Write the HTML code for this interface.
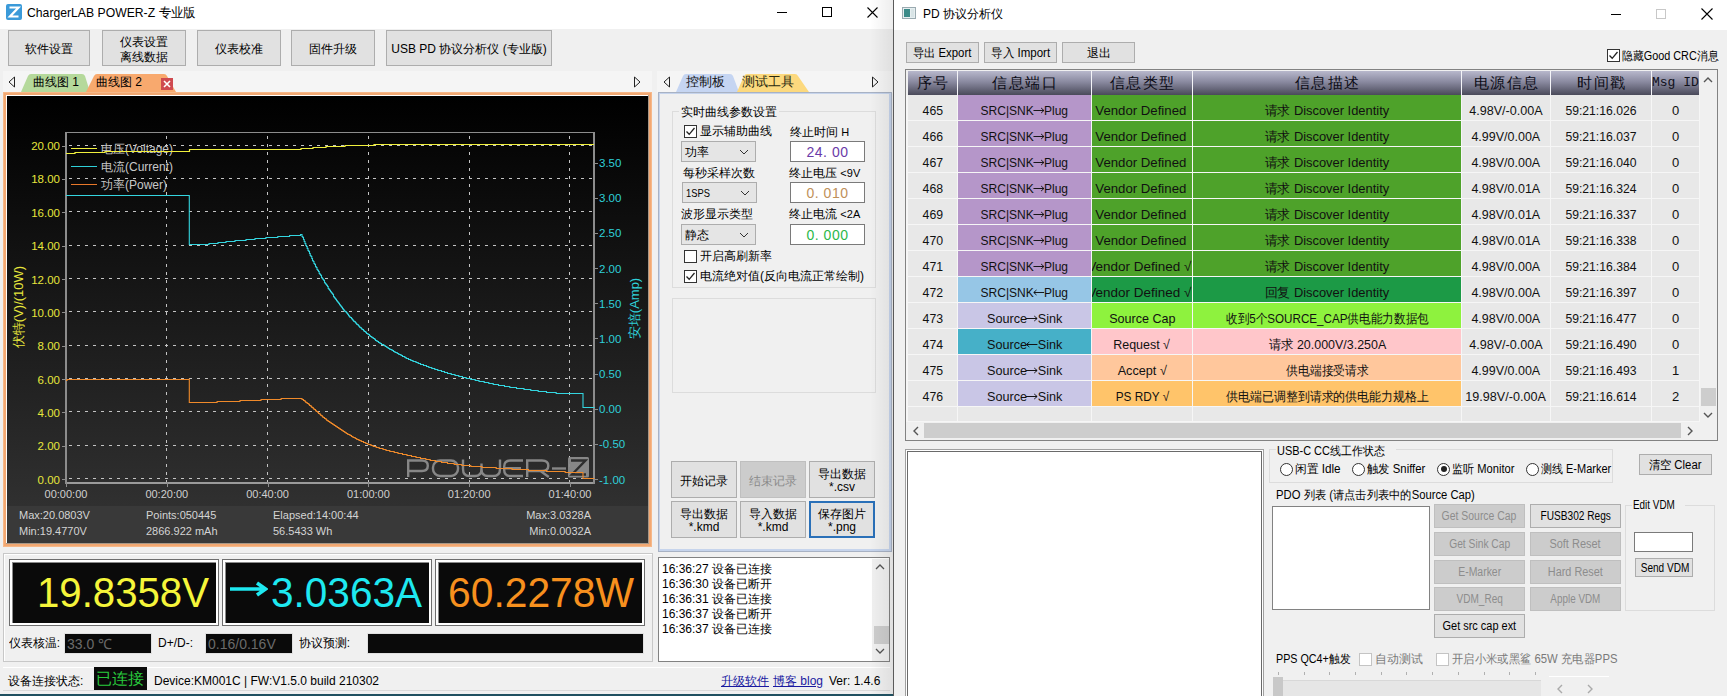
<!DOCTYPE html><html><head><meta charset="utf-8"><style>
*{box-sizing:border-box}
body{margin:0;width:1727px;height:696px;overflow:hidden;position:relative;background:#f0f0f0;font-family:"Liberation Sans",sans-serif;font-size:12px;color:#000}
.t{position:absolute;white-space:nowrap;line-height:16px}
.arr{display:inline-block;vertical-align:middle;margin:0 1px;position:relative;top:-1px}
.btn{position:absolute;background:#e1e1e1;border:1px solid #adadad;box-sizing:content-box;white-space:nowrap}
.cell{position:absolute;white-space:nowrap;text-align:center;overflow:hidden;font-size:13px;line-height:25px;padding-top:3px;color:#111}
</style></head><body>
<div style="position:absolute;left:0px;top:0px;width:893px;height:696px;background:#f0f0f0"></div>
<div style="position:absolute;left:0px;top:0px;width:893px;height:29px;background:#ffffff"></div>
<svg style="position:absolute;left:6px;top:4px" width="16" height="16" viewBox="0 0 16 16"><rect x="0" y="0" width="16" height="16" rx="2" fill="#3a9ad9"/><path d="M3.5 3.5H12.5L4 12.5H12.5" stroke="#fff" stroke-width="2.2" fill="none"/></svg>
<div class="t " style="left:27px;top:5px;font-size:12.8px;color:#000"><span id="f0" style="display:inline-block;transform-origin:left;transform:scaleX(0.9533)">ChargerLAB POWER-Z 专业版</span></div>
<div style="position:absolute;left:777px;top:12px;width:10px;height:1px;background:#000"></div>
<div style="position:absolute;left:822px;top:7px;width:10px;height:10px;border:1px solid #000"></div>
<svg style="position:absolute;left:867px;top:7px" width="11" height="11"><path d="M0.5 0.5L10.5 10.5M10.5 0.5L0.5 10.5" stroke="#000" stroke-width="1.1"/></svg>
<div class="btn" style="left:8px;top:30px;width:80px;height:34px;"><div style="position:absolute;left:0;right:0;top:calc(50% + 2px);transform:translateY(-50%);text-align:center;line-height:16px;font-size:12px;line-height:15.4px">软件设置</div></div>
<div class="btn" style="left:102px;top:30px;width:82px;height:34px;"><div style="position:absolute;left:0;right:0;top:calc(50% + 2px);transform:translateY(-50%);text-align:center;line-height:16px;font-size:12px;line-height:15.4px">仪表设置<br>离线数据</div></div>
<div class="btn" style="left:197px;top:30px;width:82px;height:34px;"><div style="position:absolute;left:0;right:0;top:calc(50% + 2px);transform:translateY(-50%);text-align:center;line-height:16px;font-size:12px;line-height:15.4px">仪表校准</div></div>
<div class="btn" style="left:291px;top:30px;width:82px;height:34px;"><div style="position:absolute;left:0;right:0;top:calc(50% + 2px);transform:translateY(-50%);text-align:center;line-height:16px;font-size:12px;line-height:15.4px">固件升级</div></div>
<div class="btn" style="left:386px;top:30px;width:164px;height:34px;"><div style="position:absolute;left:0;right:0;top:calc(50% + 2px);transform:translateY(-50%);text-align:center;line-height:16px;font-size:12px;line-height:15.4px">USB PD 协议分析仪 (专业版)</div></div>
<div style="position:absolute;left:3px;top:71px;width:649px;height:22px;background:#f5f5f5"></div>
<div style="position:absolute;left:657px;top:71px;width:236px;height:22px;background:#f5f5f5"></div>
<svg style="position:absolute;left:8px;top:76px" width="8" height="12"><path d="M6.5 1L1 6L6.5 11Z" stroke="#222" fill="none"/></svg>
<svg style="position:absolute;left:633px;top:76px" width="8" height="12"><path d="M1.5 1L7 6L1.5 11Z" stroke="#222" fill="none"/></svg>
<svg style="position:absolute;left:20px;top:73px" width="160" height="20"><path d="M1 19L8 3Q9 1 11 1H62Q64 1 65 3L70 19Z" fill="#b5d99b"/><path d="M66 19L74 3Q75 1 77 1H144Q146 1 147 3L156 19Z" fill="#f8a96e"/></svg>
<div class="t " style="left:33px;top:74px;font-size:12px">曲线图 1</div>
<div class="t " style="left:96px;top:74px;font-size:12px">曲线图 2</div>
<div style="position:absolute;left:161px;top:78px;width:12px;height:12px;background:#cf4a50"></div>
<svg style="position:absolute;left:163px;top:80px" width="8" height="8"><path d="M1 1L7 7M7 1L1 7" stroke="#fff" stroke-width="1.6"/></svg>
<div style="position:absolute;left:3px;top:92px;width:649px;height:455px;background:#f2a872;border:1px solid #f6b889"></div>
<div style="position:absolute;left:6px;top:95px;width:643px;height:449px;background:#fff;border-right:1px solid #a89888;border-bottom:1px solid #a89888"></div>
<svg style="position:absolute;left:7px;top:96px" width="641" height="447" viewBox="7 96 641 447"><defs><linearGradient id="bg" x1="0" y1="0" x2="0" y2="1"><stop offset="0" stop-color="#000"/><stop offset="0.05" stop-color="#020202"/><stop offset="1" stop-color="#303030"/></linearGradient></defs><rect x="7" y="96" width="641" height="410" fill="url(#bg)"/><rect x="7" y="506" width="641" height="37" fill="#393939"/><line x1="69" y1="478.5" x2="593" y2="478.5" stroke="#c4c4c4" stroke-width="1" stroke-dasharray="3 5"/><line x1="69" y1="445.5" x2="593" y2="445.5" stroke="#c4c4c4" stroke-width="1" stroke-dasharray="3 5"/><line x1="69" y1="411.5" x2="593" y2="411.5" stroke="#c4c4c4" stroke-width="1" stroke-dasharray="3 5"/><line x1="69" y1="378.5" x2="593" y2="378.5" stroke="#c4c4c4" stroke-width="1" stroke-dasharray="3 5"/><line x1="69" y1="345.5" x2="593" y2="345.5" stroke="#c4c4c4" stroke-width="1" stroke-dasharray="3 5"/><line x1="69" y1="311.5" x2="593" y2="311.5" stroke="#c4c4c4" stroke-width="1" stroke-dasharray="3 5"/><line x1="69" y1="278.5" x2="593" y2="278.5" stroke="#c4c4c4" stroke-width="1" stroke-dasharray="3 5"/><line x1="69" y1="245.5" x2="593" y2="245.5" stroke="#c4c4c4" stroke-width="1" stroke-dasharray="3 5"/><line x1="69" y1="211.5" x2="593" y2="211.5" stroke="#c4c4c4" stroke-width="1" stroke-dasharray="3 5"/><line x1="69" y1="178.5" x2="593" y2="178.5" stroke="#c4c4c4" stroke-width="1" stroke-dasharray="3 5"/><line x1="69" y1="145.5" x2="593" y2="145.5" stroke="#c4c4c4" stroke-width="1" stroke-dasharray="3 5"/><line x1="166.5" y1="136" x2="166.5" y2="482" stroke="#c4c4c4" stroke-width="1" stroke-dasharray="3 5"/><line x1="267.5" y1="136" x2="267.5" y2="482" stroke="#c4c4c4" stroke-width="1" stroke-dasharray="3 5"/><line x1="368.5" y1="136" x2="368.5" y2="482" stroke="#c4c4c4" stroke-width="1" stroke-dasharray="3 5"/><line x1="469.5" y1="136" x2="469.5" y2="482" stroke="#c4c4c4" stroke-width="1" stroke-dasharray="3 5"/><line x1="569.5" y1="136" x2="569.5" y2="482" stroke="#c4c4c4" stroke-width="1" stroke-dasharray="3 5"/><path d="M66 132.5H594.5V482.5H66Z" fill="none" stroke="#8c8c8c" stroke-width="1"/><path d="M65 483H595" stroke="#9a9a9a" stroke-width="2"/><path d="M66 132V484M594 132V484" stroke="#8c8c8c" stroke-width="2"/><line x1="62" y1="479.5" x2="66" y2="479.5" stroke="#8c8c8c"/><line x1="62" y1="446.5" x2="66" y2="446.5" stroke="#8c8c8c"/><line x1="62" y1="412.5" x2="66" y2="412.5" stroke="#8c8c8c"/><line x1="62" y1="379.5" x2="66" y2="379.5" stroke="#8c8c8c"/><line x1="62" y1="346.5" x2="66" y2="346.5" stroke="#8c8c8c"/><line x1="62" y1="312.5" x2="66" y2="312.5" stroke="#8c8c8c"/><line x1="62" y1="279.5" x2="66" y2="279.5" stroke="#8c8c8c"/><line x1="62" y1="246.5" x2="66" y2="246.5" stroke="#8c8c8c"/><line x1="62" y1="212.5" x2="66" y2="212.5" stroke="#8c8c8c"/><line x1="62" y1="179.5" x2="66" y2="179.5" stroke="#8c8c8c"/><line x1="62" y1="146.5" x2="66" y2="146.5" stroke="#8c8c8c"/><line x1="594" y1="163.5" x2="598" y2="163.5" stroke="#8c8c8c"/><line x1="594" y1="198.5" x2="598" y2="198.5" stroke="#8c8c8c"/><line x1="594" y1="233.5" x2="598" y2="233.5" stroke="#8c8c8c"/><line x1="594" y1="268.5" x2="598" y2="268.5" stroke="#8c8c8c"/><line x1="594" y1="303.5" x2="598" y2="303.5" stroke="#8c8c8c"/><line x1="594" y1="338.5" x2="598" y2="338.5" stroke="#8c8c8c"/><line x1="594" y1="374.5" x2="598" y2="374.5" stroke="#8c8c8c"/><line x1="594" y1="409.5" x2="598" y2="409.5" stroke="#8c8c8c"/><line x1="594" y1="444.5" x2="598" y2="444.5" stroke="#8c8c8c"/><line x1="594" y1="479.5" x2="598" y2="479.5" stroke="#8c8c8c"/><line x1="66.5" y1="482" x2="66.5" y2="487" stroke="#8c8c8c"/><line x1="167.5" y1="482" x2="167.5" y2="487" stroke="#8c8c8c"/><line x1="268.5" y1="482" x2="268.5" y2="487" stroke="#8c8c8c"/><line x1="368.5" y1="482" x2="368.5" y2="487" stroke="#8c8c8c"/><line x1="469.5" y1="482" x2="469.5" y2="487" stroke="#8c8c8c"/><line x1="570.5" y1="482" x2="570.5" y2="487" stroke="#8c8c8c"/><text x="60" y="483.7" text-anchor="end" font-size="11.5" fill="#e6e63c" font-family="Liberation Sans">0.00</text><text x="60" y="450.3" text-anchor="end" font-size="11.5" fill="#e6e63c" font-family="Liberation Sans">2.00</text><text x="60" y="417.0" text-anchor="end" font-size="11.5" fill="#e6e63c" font-family="Liberation Sans">4.00</text><text x="60" y="383.6" text-anchor="end" font-size="11.5" fill="#e6e63c" font-family="Liberation Sans">6.00</text><text x="60" y="350.2" text-anchor="end" font-size="11.5" fill="#e6e63c" font-family="Liberation Sans">8.00</text><text x="60" y="316.9" text-anchor="end" font-size="11.5" fill="#e6e63c" font-family="Liberation Sans">10.00</text><text x="60" y="283.5" text-anchor="end" font-size="11.5" fill="#e6e63c" font-family="Liberation Sans">12.00</text><text x="60" y="250.1" text-anchor="end" font-size="11.5" fill="#e6e63c" font-family="Liberation Sans">14.00</text><text x="60" y="216.7" text-anchor="end" font-size="11.5" fill="#e6e63c" font-family="Liberation Sans">16.00</text><text x="60" y="183.4" text-anchor="end" font-size="11.5" fill="#e6e63c" font-family="Liberation Sans">18.00</text><text x="60" y="150.0" text-anchor="end" font-size="11.5" fill="#e6e63c" font-family="Liberation Sans">20.00</text><text x="599" y="167.2" font-size="11.5" fill="#2fd0d8" font-family="Liberation Sans">3.50</text><text x="599" y="202.3" font-size="11.5" fill="#2fd0d8" font-family="Liberation Sans">3.00</text><text x="599" y="237.4" font-size="11.5" fill="#2fd0d8" font-family="Liberation Sans">2.50</text><text x="599" y="272.6" font-size="11.5" fill="#2fd0d8" font-family="Liberation Sans">2.00</text><text x="599" y="307.8" font-size="11.5" fill="#2fd0d8" font-family="Liberation Sans">1.50</text><text x="599" y="342.9" font-size="11.5" fill="#2fd0d8" font-family="Liberation Sans">1.00</text><text x="599" y="378.1" font-size="11.5" fill="#2fd0d8" font-family="Liberation Sans">0.50</text><text x="599" y="413.2" font-size="11.5" fill="#2fd0d8" font-family="Liberation Sans">0.00</text><text x="599" y="448.3" font-size="11.5" fill="#2fd0d8" font-family="Liberation Sans">-0.50</text><text x="599" y="483.5" font-size="11.5" fill="#2fd0d8" font-family="Liberation Sans">-1.00</text><text x="66.0" y="498" text-anchor="middle" font-size="11" fill="#cfcfcf" font-family="Liberation Sans">00:00:00</text><text x="166.8" y="498" text-anchor="middle" font-size="11" fill="#cfcfcf" font-family="Liberation Sans">00:20:00</text><text x="267.6" y="498" text-anchor="middle" font-size="11" fill="#cfcfcf" font-family="Liberation Sans">00:40:00</text><text x="368.4" y="498" text-anchor="middle" font-size="11" fill="#cfcfcf" font-family="Liberation Sans">01:00:00</text><text x="469.2" y="498" text-anchor="middle" font-size="11" fill="#cfcfcf" font-family="Liberation Sans">01:20:00</text><text x="570.0" y="498" text-anchor="middle" font-size="11" fill="#cfcfcf" font-family="Liberation Sans">01:40:00</text><text transform="translate(23,307) rotate(-90)" text-anchor="middle" font-size="13" fill="#e6e63c" font-family="Liberation Sans">伏特(V)/(10W)</text><text transform="translate(639,308.5) rotate(-90)" text-anchor="middle" font-size="13" fill="#2fd0d8" font-family="Liberation Sans">安培(Amp)</text><text x="19" y="519" font-size="11" fill="#d4d4d4" font-family="Liberation Sans">Max:20.0803V</text><text x="19" y="535" font-size="11" fill="#d4d4d4" font-family="Liberation Sans">Min:19.4770V</text><text x="146" y="519" font-size="11" fill="#d4d4d4" font-family="Liberation Sans">Points:050445</text><text x="146" y="535" font-size="11" fill="#d4d4d4" font-family="Liberation Sans">2866.922 mAh</text><text x="273" y="519" font-size="11" fill="#d4d4d4" font-family="Liberation Sans">Elapsed:14:00:44</text><text x="273" y="535" font-size="11" fill="#d4d4d4" font-family="Liberation Sans">56.5433 Wh</text><text x="591" y="519" text-anchor="end" font-size="11" fill="#d4d4d4" font-family="Liberation Sans">Max:3.0328A</text><text x="591" y="535" text-anchor="end" font-size="11" fill="#d4d4d4" font-family="Liberation Sans">Min:0.0032A</text><g fill="none" stroke="#8c8c8c" stroke-width="2.4" opacity="0.95" stroke-linecap="butt"><path d="M408.2 477V460.5H422Q427.8 460.5 427.8 465.8Q427.8 471 422 471H408.2"/><rect x="433" y="460.5" width="25" height="15.5" rx="7"/><path d="M463 459.5V469Q463 476 469.5 476H475Q481.5 476 481.5 469V463.5M481.5 469Q481.5 476 488 476H493.5Q500 476 500 469V459.5"/><path d="M523 460.5H510.5Q504.2 460.5 504.2 466.5V470Q504.2 476 510.5 476H523M505 468.3H521"/><path d="M527.2 477V460.5H542Q548.3 460.5 548.3 465.8Q548.3 471 542 471H527.2M540.5 471L548.8 477"/><path d="M552 468.5H566"/></g><rect x="568" y="457" width="21" height="20.5" rx="1.5" fill="#8c8c8c" opacity="0.95"/><path d="M571 460.5H585.5L572 474.5H586" stroke="#2e2e2e" stroke-width="2.4" fill="none"/><line x1="71" y1="148.5" x2="97" y2="148.5" stroke="#f0f03c" stroke-width="1"/><text x="101" y="153.0" font-size="12" fill="#c8c8c8" font-family="Liberation Sans">电压(Voltage)</text><line x1="71" y1="166.5" x2="97" y2="166.5" stroke="#2fd0d8" stroke-width="1"/><text x="101" y="171.0" font-size="12" fill="#c8c8c8" font-family="Liberation Sans">电流(Current)</text><line x1="71" y1="184.5" x2="97" y2="184.5" stroke="#e8782a" stroke-width="1"/><text x="101" y="189.0" font-size="12" fill="#c8c8c8" font-family="Liberation Sans">功率(Power)</text><polyline fill="none" stroke="#f0f03c" stroke-width="1.2" points="66,153.5 75,153.5 75,152.5 105,152.5 105,151.5 189.5,151.5 189.5,149.5 301,149.5 301,148.5 313,148.5 313,147.5 326,147.5 326,146.5 345,146.5 345,145.5 374,145.5 374,144.5 594,144.5"/><path fill="none" stroke="#34d6e0" stroke-width="1.1" d="M66.0 195.5H67.0H68.0H69.0H70.0H71.0H72.0H73.0H74.0H75.0H76.0H77.0H78.0H79.0H80.0H81.0H82.0H83.0H84.0H85.0H86.0H87.1H88.1H89.1H90.1H91.1H92.1H93.1H94.1H95.1H96.1H97.1H98.1H99.1H100.1H101.1H102.1H103.1H104.1H105.1H106.1H107.1H108.1H109.1H110.1H111.1H112.1H113.1H114.1H115.1H116.1H117.1H118.1H119.1H120.1H121.1H122.1H123.1H124.1H125.1H126.1H127.1H128.2H129.2H130.2H131.2H132.2H133.2H134.2H135.2H136.2H137.2H138.2H139.2H140.2H141.2H142.2H143.2H144.2H145.2H146.2H147.2H148.2H149.2H150.2H151.2H152.2H153.2H154.2H155.2H156.2H157.2H158.2H159.2H160.2H161.2H162.2H163.2H164.2H165.2H166.2H167.2H168.2H169.3H170.3H171.3H172.3H173.3H174.3H175.3H176.3H177.3H178.3H179.3H180.3H181.3H182.3H183.3H184.3H185.3H186.3H187.3H188.3H189.3V195.0H189.3V244.5H190.3H191.2H192.2H193.2H194.2H195.1H196.1H197.1H198.1H199.0H200.0H201.0H202.0H203.0H204.0H205.0H206.0H207.0H208.0H209.0V243.5H210.0H211.0H212.0H213.0H214.0H215.0H216.0H217.0H218.0V242.5H219.0H220.0H221.0H222.0H223.0H224.0H225.0H226.0V241.5H227.0H228.0H229.0H230.0H231.0H232.0H233.0H234.0H235.0V240.5H236.0H237.0H238.0H239.0H240.0H241.0H242.0H243.0H244.0H245.0H246.0V239.5H247.0H248.0H249.0H250.0H251.0H252.0H253.0H254.0H255.0V238.5H256.0H257.0H258.0H259.0H260.0H261.0H262.0H263.0H264.0H264.9H265.9V237.5H266.9H267.9H268.9H269.9H270.9H271.9H272.8H273.8H274.8H275.8H276.8H277.8V236.5H278.8H279.8H280.8H281.7H282.7H283.7H284.7H285.7H286.7H287.7H288.7H289.6V235.5H290.6H291.6H292.6H293.6H294.6H295.6H296.6H297.5H298.5H299.5H300.5V234.5H301.5H302.0V236.5H302.8V237.5H303.5V239.5H304.2V241.5H305.0V243.5H305.8V245.5H306.5V246.5H307.2V248.5H308.0V250.5H308.8V251.5H309.5V253.5H310.2V255.5H311.0V256.5H311.8V258.5H312.5V260.5H313.2V261.5H314.0V263.5H314.8V264.5H315.5V266.5H316.2V267.5H317.0V269.5H317.8V270.5H318.5V271.5H319.2V273.5H320.0V274.5H320.8V275.5H321.5V277.5H322.2V278.5H323.0V279.5H323.8V280.5H324.5V282.5H325.2V283.5H326.0V284.5H326.8V285.5H327.5V286.5H328.2V288.5H329.0V289.5H329.8V290.5H330.5V291.5H331.2V292.5H332.0V293.5H332.8V294.5H333.5V296.5H334.2V297.5H335.0V298.5H335.8V299.5H336.5V300.5H337.2V301.5H338.0V302.5H338.8V303.5H339.5V304.5H340.2V305.5H341.0V306.5H341.8V307.5H342.5V308.5H343.2V309.5H344.0V310.5H344.8V311.5H345.5H346.2V312.5H347.0V313.5H347.8V314.5H348.5V315.5H349.2V316.5H350.0V317.5H350.8H351.5V318.5H352.2V319.5H353.0V320.5H353.8V321.5H354.5H355.2V322.5H356.0V323.5H356.8V324.5H357.5H358.2V325.5H359.0V326.5H359.8V327.5H360.5H361.2V328.5H362.0V329.5H362.8H363.5V330.5H364.2V331.5H365.0H365.8V332.5H366.5V333.5H367.2H368.0V334.5H368.8H369.5V335.5H370.2V336.5H371.0H371.8V337.5H372.5H373.2V338.5H374.0H374.8V339.5H375.5V340.5H376.2H377.0V341.5H377.8H378.5V342.5H379.2H380.0V343.5H380.8H381.5V344.5H382.2H383.0H383.8V345.5H384.5H385.2V346.5H386.0H386.8V347.5H387.5H388.2V348.5H389.0H389.8V349.5H390.5H391.2H392.0V350.5H392.8H393.5V351.5H394.2H395.0V352.5H395.8H396.5H397.2V353.5H398.0H398.8V354.5H399.5H400.2H401.0V355.5H401.8H402.5V356.5H403.2H404.0H404.8V357.5H405.5H406.2V358.5H407.0H407.8H408.5V359.5H409.2H410.0H410.8V360.5H411.5H412.2H413.0V361.5H413.8H414.5H415.2H416.0V362.5H416.8H417.5H418.2V363.5H419.0H419.8H420.5V364.5H421.2H422.0H422.8H423.5V365.5H424.2H425.0H425.8H426.5V366.5H427.2H428.0H428.8V367.5H429.5H430.2H431.0H431.8V368.5H432.5H433.2H434.0H434.8V369.5H435.5H436.2H437.0H437.8V370.5H438.5H439.2H440.0H440.8H441.5V371.5H442.2H443.0H443.8H444.5V372.5H445.2H446.0H446.8H447.5V373.5H448.2H449.0H449.8H450.5H451.2V374.5H452.0H452.8H453.5H454.2H455.0V375.5H455.8H456.5H457.2H458.0H458.8V376.5H459.5H460.2H461.0H461.8H462.5V377.5H463.2H464.0H464.8H465.5H466.2V378.5H467.0H467.8H468.5H469.2H470.0H470.8V379.5H471.5H472.2H473.0H473.8H474.5H475.2V380.5H476.0H476.8H477.5H478.2H479.0V381.5H479.8H480.5H481.2H482.0H482.8H483.5H484.2V382.5H485.0H485.8H486.5H487.2H488.0H488.8V383.5H489.5H490.2H491.0H491.8H492.5H493.2V384.5H494.0H494.8H495.5H496.2H497.0H497.8H498.5V385.5H499.2H500.0H500.8H501.5H502.2H503.0H503.8H504.5V386.5H505.2H506.0H506.8H507.5H508.2H509.0H509.8V387.5H510.5H511.2H512.0H512.8H513.5H514.2H515.0H515.8H516.5V388.5H517.2H518.0H518.8H519.5H520.2H521.0H521.8H522.5H523.2H524.0V389.5H524.8H525.5H526.2H527.0H527.8H528.5H529.2H530.0H530.8V390.5H531.5H532.2H533.0H533.8H534.5H535.2H536.0H536.8H537.5H538.2V391.5H539.0H539.8H540.5H541.2H542.0H542.8H543.5H544.2H545.0H545.8H546.5V392.5H547.2H548.0H548.8H549.5H550.2H551.0H551.8H552.5H553.2H554.0H554.8H555.5H556.2V393.5H557.0H557.8H558.5H559.2H560.0H560.8H561.5H562.2H563.0H563.8H564.5H565.2H566.0H566.8H567.5H568.2H569.0H569.8H570.5H571.2H572.0H572.8H573.5H574.2H575.0H575.8H576.5H577.2H578.0H578.8H579.5H580.2H581.0H581.8H582.5H583.0V393.0H583.0V407.5H584.0H585.0H586.0H587.0H588.0H589.0H590.0H591.0H592.0H593.0H594.0V407.0"/><path fill="none" stroke="#f08a2a" stroke-width="1.1" d="M66.0 380.5H67.0V379.5H68.0H69.0H70.0H71.0H72.0H73.0H74.0H75.0H76.0H77.0H78.0H79.0H80.0H81.0H82.0H83.0H84.0H85.0H86.0H87.0H88.0H89.0H90.0H91.0H92.0H93.0H94.0H95.0H96.0H97.0H98.0H99.0H100.0H101.0H102.0H103.0H104.0H105.0H106.0H107.0H108.0H109.0H110.0H111.0H112.0H113.0H114.0H115.0H116.0H117.0H118.0H119.0H120.0H121.0H122.0H123.0H124.0H125.0H126.0H127.0H128.0H129.0H130.0H131.0H132.0H133.0H134.0H135.0H136.0H137.0H138.0H139.0H140.0H141.0H142.0H143.0H144.0H145.0H146.0H147.0H148.0H149.0H150.0H151.0H152.0H153.0H154.0H155.0H156.0H157.1H158.1H159.1H160.1H161.1H162.1H163.1H164.1H165.1H166.1H167.1H168.1H169.1H170.2H171.2H172.2H173.2H174.2H175.2H176.2H177.2H178.2H179.2H180.2H181.2H182.2H183.3H184.3H185.3H186.3H187.3H188.3H189.3V378.5H189.3V402.5H190.3H191.3H192.3H193.3H194.3H195.3H196.2H197.2H198.2H199.2H200.2H201.2H202.2H203.2H204.2H205.2H206.2H207.2H208.2H209.2H210.1H211.1H212.1H213.1H214.1H215.1H216.1H217.1V401.5H218.1H219.1H220.1H221.1H222.1H223.1H224.0H225.0H226.0H227.0H228.0H229.0H230.0H231.0H232.0H233.0H234.0H235.0H236.0H237.0H238.0H239.0H240.0V400.5H241.0H242.0H243.0H244.0H245.0H246.0H247.0H248.0H249.0H250.0H251.0H252.0H253.0H254.0H255.0H256.0H257.0H258.0H259.0H260.0H261.0V399.5H262.0H263.0H264.0H265.0H266.0H267.0H268.0H269.0H270.0H271.0H272.0H273.0H274.0H275.1H276.1H277.1H278.1H279.1H280.1H281.1V398.5H282.1H283.1H284.1H285.1H286.2H287.2H288.2H289.2H290.2H291.2H292.2H293.2H294.2H295.2H296.3H297.3H298.3H299.3H300.3H301.1H302.0V399.5H302.8H303.5V400.5H304.2H305.0V401.5H305.8V402.5H306.5H307.2V403.5H308.0H308.8V404.5H309.5V405.5H310.2H311.0V406.5H311.8V407.5H312.5H313.2V408.5H314.0V409.5H314.8H315.5V410.5H316.2V411.5H317.0H317.8V412.5H318.5V413.5H319.2H320.0V414.5H320.8V415.5H321.5H322.2V416.5H323.0V417.5H323.8H324.5V418.5H325.2H326.0V419.5H326.8V420.5H327.5H328.2V421.5H329.0H329.8V422.5H330.5H331.2V423.5H332.0H332.8V424.5H333.5H334.2V425.5H335.0H335.8V426.5H336.5H337.2V427.5H338.0H338.8V428.5H339.5H340.2V429.5H341.0H341.8V430.5H342.5H343.2V431.5H344.0H344.8V432.5H345.5H346.2V433.5H347.0H347.8V434.5H348.5H349.2H350.0V435.5H350.8H351.5V436.5H352.2H353.0V437.5H353.8H354.5H355.2V438.5H356.0H356.8V439.5H357.5H358.2H359.0V440.5H359.8H360.5H361.2V441.5H362.0H362.8H363.5V442.5H364.2H365.0H365.8V443.5H366.5H367.2H368.0V444.5H368.8H369.5H370.2H371.0V445.5H371.8H372.5H373.2V446.5H374.0H374.8H375.5H376.2V447.5H377.0H377.8H378.5H379.2V448.5H380.0H380.8H381.5H382.2H383.0V449.5H383.8H384.5H385.2H386.0V450.5H386.8H387.5H388.2H389.0H389.8V451.5H390.5H391.2H392.0H392.8H393.5H394.2V452.5H395.0H395.8H396.5H397.2H398.0V453.5H398.8H399.5H400.2H401.0H401.8H402.5V454.5H403.2H404.0H404.8H405.5H406.2H407.0V455.5H407.8H408.5H409.2H410.0H410.8H411.5V456.5H412.2H413.0H413.8H414.5H415.2H416.0V457.5H416.8H417.5H418.2H419.0H419.8H420.5V458.5H421.2H422.0H422.8H423.5H424.2H425.0H425.8V459.5H426.5H427.2H428.0H428.8H429.5H430.2V460.5H431.0H431.8H432.5H433.2H434.0H434.8H435.5V461.5H436.2H437.0H437.8H438.5H439.2H440.0H440.8H441.5V462.5H442.2H443.0H443.8H444.5H445.2H446.0H446.8H447.5V463.5H448.2H449.0H449.8H450.5H451.2H452.0H452.8H453.5H454.2V464.5H455.0H455.8H456.5H457.2H458.0H458.8H459.5H460.2H461.0H461.8V465.5H462.5H463.2H464.0H464.8H465.5H466.2H467.0H467.8H468.5H469.2H470.0H470.8V466.5H471.5H472.2H473.0H473.8H474.5H475.2H476.0H476.8H477.5H478.2H479.0H479.8H480.5H481.2H482.0V467.5H482.8H483.5H484.2H485.0H485.8H486.5H487.2H488.0H488.8H489.5H490.2H491.0H491.8H492.5H493.2H494.0H494.8H495.5H496.2V468.5H497.0H497.8H498.5H499.2H500.0H500.8H501.5H502.2H503.0H503.8H504.5H505.2H506.0H506.8H507.5H508.2H509.0H509.8H510.5H511.2H512.0V469.5H512.8H513.5H514.2H515.0H515.8H516.5H517.2H518.0H518.8H519.5H520.2H521.0H521.8H522.5H523.2H524.0H524.8H525.5H526.2H527.0H527.8H528.5V470.5H529.2H530.0H530.8H531.5H532.2H533.0H533.8H534.5H535.2H536.0H536.8H537.5H538.2H539.0H539.8H540.5H541.2H542.0H542.8H543.5H544.2H545.0H545.8H546.5V471.5H547.2H548.0H548.8H549.5H550.2H551.0H551.8H552.5H553.2H554.0H554.8H555.5H556.2H557.0H557.8H558.5H559.2H560.0H560.8H561.5H562.2H563.0H563.8H564.5H565.2V472.5H566.0H566.8H567.5H568.2H569.0H569.8H570.5H571.2H572.0H572.8H573.5H574.2H575.0H575.8H576.5H577.2H578.0H578.8H579.5H580.2H581.0H581.8H582.5H583.0V472.3H583.0V478.5H584.0H585.0H586.0H587.0H588.0H589.0H590.0H591.0H592.0H593.0H594.0V478.3"/></svg>
<svg style="position:absolute;left:663px;top:76px" width="8" height="12"><path d="M6.5 1L1 6L6.5 11Z" stroke="#222" fill="none"/></svg>
<svg style="position:absolute;left:871px;top:76px" width="8" height="12"><path d="M1.5 1L7 6L1.5 11Z" stroke="#222" fill="none"/></svg>
<svg style="position:absolute;left:675px;top:73px" width="140" height="20"><path d="M1 19L8 3Q9 1 11 1H55Q57 1 58 3L64 19Z" fill="#c5d5f2"/><path d="M62 19L69 3Q70 1 72 1H120Q122 1 123 3L134 19Z" fill="#fcd97e"/></svg>
<div class="t " style="left:686px;top:74px;font-size:13px;color:#111">控制板</div>
<div class="t " style="left:742px;top:74px;font-size:13px;color:#2a2a10">测试工具</div>
<div style="position:absolute;left:658px;top:92px;width:234px;height:460px;border:1px solid #a8b2c4;background:#f0f0f0"></div>
<div style="position:absolute;left:659px;top:93px;width:232px;height:458px;border:2px solid #c6d4ec;border-left-width:1px;border-top-width:1px"></div>
<div style="position:absolute;left:672px;top:111px;width:204px;height:177px;border:1px solid #dcdcdc"></div>
<div class="t " style="left:679px;top:104px;background:#f0f0f0;padding:0 2px">实时曲线参数设置</div>
<div style="position:absolute;left:684px;top:125px;width:13px;height:13px;border:1px solid #333;background:#fff"></div><svg style="position:absolute;left:684px;top:125px" width="13" height="13"><path d="M2.5 6.5L5.2 9.3L10.5 3" stroke="#222" stroke-width="1.3" fill="none"/></svg>
<div class="t " style="left:700px;top:123px;font-size:12px">显示辅助曲线</div>
<div class="t " style="left:790px;top:124px;font-size:12px">终止时间 <span style='font-size:11px'>H</span></div>
<div class="btn" style="left:681px;top:141px;width:73px;height:19px;background:#e5e5e5;border-color:#adadad"></div>
<div class="t " style="left:685px;top:143.5px;font-size:12px">功率</div>
<svg style="position:absolute;left:739px;top:148.5px" width="10" height="6"><path d="M1 1L5 5L9 1" stroke="#333" fill="none"/></svg>
<div style="position:absolute;left:790px;top:141px;width:75px;height:21px;border:1px solid #7a7a7a;background:#fff"></div>
<div class="t" style="left:790px;width:75px;text-align:center;top:143.5px;line-height:16px;font-size:14px;color:#6a3aa8;letter-spacing:0.5px">24. 00</div>
<div class="t " style="left:683px;top:165px;font-size:12px">每秒采样次数</div>
<div class="t " style="left:789px;top:165px;font-size:12px">终止电压 <span style='font-size:11px'>&lt;9V</span></div>
<div class="btn" style="left:682px;top:182px;width:73px;height:19px;background:#e5e5e5;border-color:#adadad"></div>
<div class="t " style="left:686px;top:184.5px;font-size:12px"><span style='font-size:11px;display:inline-block;transform:scaleX(0.85);transform-origin:left'>1SPS</span></div>
<svg style="position:absolute;left:740px;top:189.5px" width="10" height="6"><path d="M1 1L5 5L9 1" stroke="#333" fill="none"/></svg>
<div style="position:absolute;left:790px;top:182px;width:75px;height:21px;border:1px solid #7a7a7a;background:#fff"></div>
<div class="t" style="left:790px;width:75px;text-align:center;top:184.5px;line-height:16px;font-size:14px;color:#c0905a;letter-spacing:0.5px">0. 010</div>
<div class="t " style="left:681px;top:206px;font-size:12px">波形显示类型</div>
<div class="t " style="left:789px;top:206px;font-size:12px">终止电流 <span style='font-size:11px'>&lt;2A</span></div>
<div class="btn" style="left:681px;top:224px;width:73px;height:19px;background:#e5e5e5;border-color:#adadad"></div>
<div class="t " style="left:685px;top:226.5px;font-size:12px">静态</div>
<svg style="position:absolute;left:739px;top:231.5px" width="10" height="6"><path d="M1 1L5 5L9 1" stroke="#333" fill="none"/></svg>
<div style="position:absolute;left:790px;top:224px;width:75px;height:21px;border:1px solid #7a7a7a;background:#fff"></div>
<div class="t" style="left:790px;width:75px;text-align:center;top:226.5px;line-height:16px;font-size:14px;color:#2cb84a;letter-spacing:0.5px">0. 000</div>
<div style="position:absolute;left:684px;top:250px;width:13px;height:13px;border:1px solid #333;background:#fff"></div>
<div class="t " style="left:700px;top:248px;font-size:12px">开启高刷新率</div>
<div style="position:absolute;left:684px;top:270px;width:13px;height:13px;border:1px solid #333;background:#fff"></div><svg style="position:absolute;left:684px;top:270px" width="13" height="13"><path d="M2.5 6.5L5.2 9.3L10.5 3" stroke="#222" stroke-width="1.3" fill="none"/></svg>
<div class="t " style="left:700px;top:268px;font-size:12px">电流绝对值(反向电流正常绘制)</div>
<div style="position:absolute;left:672px;top:298px;width:204px;height:95px;border:1px solid #dcdcdc"></div>
<div class="btn" style="left:671px;top:461px;width:64px;height:35px;"><div style="position:absolute;left:0;right:0;top:calc(50% + 1px);transform:translateY(-50%);text-align:center;line-height:16px;font-size:12px">开始记录</div></div>
<div class="btn" style="left:740px;top:461px;width:64px;height:35px;background:#cccccc;border-color:#bfbfbf"><div style="position:absolute;left:0;right:0;top:calc(50% + 1px);transform:translateY(-50%);text-align:center;line-height:16px;font-size:12px;color:#8a8a8a">结束记录</div></div>
<div class="btn" style="left:809px;top:461px;width:64px;height:35px;"><div style="position:absolute;left:0;right:0;top:calc(50% + 1px);transform:translateY(-50%);text-align:center;line-height:16px;font-size:12px;line-height:13px">导出数据<br>*.csv</div></div>
<div class="btn" style="left:671px;top:501px;width:64px;height:35px;"><div style="position:absolute;left:0;right:0;top:calc(50% + 1px);transform:translateY(-50%);text-align:center;line-height:16px;font-size:12px;line-height:13px">导出数据<br>*.kmd</div></div>
<div class="btn" style="left:740px;top:501px;width:64px;height:35px;"><div style="position:absolute;left:0;right:0;top:calc(50% + 1px);transform:translateY(-50%);text-align:center;line-height:16px;font-size:12px;line-height:13px">导入数据<br>*.kmd</div></div>
<div class="btn" style="left:809px;top:501px;width:64px;height:35px;border:2px solid #2a70b8;background:#e1e1e1;width:62px;height:33px"><div style="position:absolute;left:0;right:0;top:calc(50% + 1px);transform:translateY(-50%);text-align:center;line-height:16px;font-size:12px;line-height:13px">保存图片<br>*.png</div></div>
<div style="position:absolute;left:3px;top:553px;width:650px;height:109px;border:1px solid #c8c8c8"></div>
<div style="position:absolute;left:4px;top:554px;width:648px;height:107px;border:1px solid #fff;border-right:none;border-bottom:none"></div>
<div style="position:absolute;left:9px;top:559px;width:210px;height:67px;border:1px solid #6e6e6e;background:#fff"></div>
<div style="position:absolute;left:12px;top:562px;width:204px;height:61px;border-top:1px solid #8a8a8a;border-left:1px solid #8a8a8a;background:#0a0a0a"></div>
<div style="position:absolute;left:36.5px;top:563px;line-height:59px;font-size:43px;color:#f5f53a;white-space:nowrap"><span id="f1" style="display:inline-block;transform-origin:left;transform:scaleX(0.9341)">19.8358V</span></div>
<div style="position:absolute;left:222px;top:559px;width:210px;height:67px;border:1px solid #6e6e6e;background:#fff"></div>
<div style="position:absolute;left:225px;top:562px;width:204px;height:61px;border-top:1px solid #8a8a8a;border-left:1px solid #8a8a8a;background:#0a0a0a"></div>
<div style="position:absolute;left:270.8px;top:563px;line-height:59px;font-size:43px;color:#1ee8f0;white-space:nowrap"><span id="f2" style="display:inline-block;transform-origin:left;transform:scaleX(0.9426)">3.0363A</span></div>
<svg style="position:absolute;left:229px;top:581px" width="39" height="16"><path d="M1 8H36M28 2L36.5 8L28 14" stroke="#1ee8f0" stroke-width="3.6" fill="none" stroke-linejoin="miter"/></svg>
<div style="position:absolute;left:435px;top:559px;width:210px;height:67px;border:1px solid #6e6e6e;background:#fff"></div>
<div style="position:absolute;left:438px;top:562px;width:204px;height:61px;border-top:1px solid #8a8a8a;border-left:1px solid #8a8a8a;background:#0a0a0a"></div>
<div style="position:absolute;left:447.8px;top:563px;line-height:59px;font-size:43px;color:#f7901e;white-space:nowrap"><span id="f3" style="display:inline-block;transform-origin:left;transform:scaleX(0.9488)">60.2278W</span></div>
<div class="t " style="left:9px;top:635px;font-size:12px"><span id="f4" style="display:inline-block;transform-origin:left;transform:scaleX(0.9933)">仪表核温:</span></div>
<div style="position:absolute;left:64px;top:633px;width:88px;height:21px;border:1px solid #e0e0e0;background:#0a0a0a"></div>
<div class="t " style="left:67px;top:635px;font-size:14px;color:#6a6a6a;line-height:18px">33.0 ℃</div>
<div class="t " style="left:158px;top:635px;font-size:12px">D+/D-:</div>
<div style="position:absolute;left:205px;top:633px;width:88px;height:21px;border:1px solid #e0e0e0;background:#0a0a0a"></div>
<div class="t " style="left:208px;top:635px;font-size:14px;color:#6a6a6a;line-height:18px">0.16/0.16V</div>
<div class="t " style="left:299px;top:635px;font-size:12px"><span id="f5" style="display:inline-block;transform-origin:left;transform:scaleX(0.9933)">协议预测:</span></div>
<div style="position:absolute;left:367px;top:633px;width:277px;height:21px;border:1px solid #e0e0e0;background:#0a0a0a"></div>
<div style="position:absolute;left:658px;top:557px;width:232px;height:105px;border:1px solid #828282;background:#fff"></div>
<div class="t " style="left:662px;top:562px;font-size:12px;line-height:14px">16:36:27 设备已连接</div>
<div class="t " style="left:662px;top:577px;font-size:12px;line-height:14px">16:36:30 设备已断开</div>
<div class="t " style="left:662px;top:592px;font-size:12px;line-height:14px">16:36:31 设备已连接</div>
<div class="t " style="left:662px;top:607px;font-size:12px;line-height:14px">16:36:37 设备已断开</div>
<div class="t " style="left:662px;top:622px;font-size:12px;line-height:14px">16:36:37 设备已连接</div>
<div style="position:absolute;left:872px;top:559px;width:17px;height:102px;background:#f0f0f0"></div>
<svg style="position:absolute;left:875px;top:563px" width="10" height="8"><path d="M1 6L5 2L9 6" stroke="#555" stroke-width="1.3" fill="none"/></svg>
<svg style="position:absolute;left:875px;top:647px" width="10" height="8"><path d="M1 2L5 6L9 2" stroke="#555" stroke-width="1.3" fill="none"/></svg>
<div style="position:absolute;left:874px;top:626px;width:15px;height:18px;background:#cdcdcd"></div>
<div style="position:absolute;left:3px;top:667px;width:887px;height:24px;border-top:1px solid #fff;border-bottom:1px solid #dadada"></div>
<div class="t " style="left:8px;top:673px;font-size:12px">设备连接状态:</div>
<div style="position:absolute;left:94px;top:667px;width:53px;height:23px;background:#0a0a0a"></div>
<div class="t " style="left:96px;top:669px;font-size:16px;color:#28c83c;line-height:19px">已连接</div>
<div class="t " style="left:154px;top:673px;font-size:12px">Device:KM001C | FW:V1.5.0 build 210302</div>
<div class="t " style="left:721px;top:673px;font-size:12px;color:#1a1aa0"><u>升级软件</u></div>
<div class="t " style="left:773px;top:673px;font-size:12px;color:#1a1aa0"><u>博客 blog</u></div>
<div class="t " style="left:829px;top:673px;font-size:12px">Ver: 1.4.6</div>
<div style="position:absolute;left:0px;top:694px;width:893px;height:2px;background:#1f5060"></div>
<div style="position:absolute;left:870px;top:0px;width:23px;height:694px;background:linear-gradient(to right,rgba(0,0,0,0),rgba(0,0,0,0.07))"></div>
<div style="position:absolute;left:893px;top:0px;width:834px;height:696px;background:#f0f0f0;border-left:1px solid #5a5a5a"></div>
<div style="position:absolute;left:894px;top:0px;width:833px;height:30px;background:#fff"></div>
<svg style="position:absolute;left:902px;top:7px" width="14" height="12"><rect x="0.5" y="0.5" width="13" height="11" fill="#e6eef0" stroke="#9aaab0"/><rect x="2" y="2" width="6" height="8" fill="#3a8a88"/><rect x="9" y="2" width="3" height="8" fill="#d8e4e6"/></svg>
<div class="t " style="left:923px;top:6px;font-size:12px">PD 协议分析仪</div>
<div style="position:absolute;left:1611px;top:14px;width:10px;height:1px;background:#000"></div>
<div style="position:absolute;left:1656px;top:9px;width:10px;height:10px;border:1px solid #c8c8c8"></div>
<svg style="position:absolute;left:1701px;top:8px" width="12" height="12"><path d="M0.5 0.5L11.5 11.5M11.5 0.5L0.5 11.5" stroke="#000" stroke-width="1.1"/></svg>
<div class="btn" style="left:906px;top:42px;width:71px;height:19px;"><div style="position:absolute;left:0;right:0;top:calc(50% + 0px);transform:translateY(-50%);text-align:center;line-height:16px;font-size:12px"><span id="f6" style="display:inline-block;transform-origin:center;transform:scaleX(0.9465)">导出 Export</span></div></div>
<div class="btn" style="left:984px;top:42px;width:71px;height:19px;"><div style="position:absolute;left:0;right:0;top:calc(50% + 0px);transform:translateY(-50%);text-align:center;line-height:16px;font-size:12px"><span id="f7" style="display:inline-block;transform-origin:center;transform:scaleX(0.9602)">导入 Import</span></div></div>
<div class="btn" style="left:1062px;top:42px;width:71px;height:19px;"><div style="position:absolute;left:0;right:0;top:calc(50% + 0px);transform:translateY(-50%);text-align:center;line-height:16px;font-size:12px">退出</div></div>
<div style="position:absolute;left:1607px;top:49px;width:13px;height:13px;border:1px solid #333;background:#fff"></div><svg style="position:absolute;left:1607px;top:49px" width="13" height="13"><path d="M2.5 6.5L5.2 9.3L10.5 3" stroke="#222" stroke-width="1.3" fill="none"/></svg>
<div class="t " style="left:1622px;top:48px;font-size:12px"><span id="f8" style="display:inline-block;transform-origin:left;transform:scaleX(0.9045)">隐藏Good CRC消息</span></div>
<div style="position:absolute;left:905px;top:69px;width:813px;height:372px;border:1px solid #828282;background:#f0f0f0"></div>
<div style="position:absolute;left:906px;top:70px;width:794px;height:25px;background:#f0f0f0"></div>
<div style="position:absolute;left:908px;top:71px;width:49px;height:24px;background:linear-gradient(#b8b8cc,#8a8aa0 45%,#4a4a5a)"></div>
<div class="t" style="left:908px;width:49px;text-align:center;top:75.0px;line-height:16px;font-size:14.5px;letter-spacing:1.5px;color:#0c0c16;text-indent:1.5px">序号</div>
<div style="position:absolute;left:958px;top:71px;width:133px;height:24px;background:linear-gradient(#b8b8cc,#8a8aa0 45%,#4a4a5a)"></div>
<div class="t" style="left:958px;width:133px;text-align:center;top:75.0px;line-height:16px;font-size:14.5px;letter-spacing:1.5px;color:#0c0c16;text-indent:1.5px">信息端口</div>
<div style="position:absolute;left:1092px;top:71px;width:100px;height:24px;background:linear-gradient(#b8b8cc,#8a8aa0 45%,#4a4a5a)"></div>
<div class="t" style="left:1092px;width:100px;text-align:center;top:75.0px;line-height:16px;font-size:14.5px;letter-spacing:1.5px;color:#0c0c16;text-indent:1.5px">信息类型</div>
<div style="position:absolute;left:1193px;top:71px;width:268px;height:24px;background:linear-gradient(#b8b8cc,#8a8aa0 45%,#4a4a5a)"></div>
<div class="t" style="left:1193px;width:268px;text-align:center;top:75.0px;line-height:16px;font-size:14.5px;letter-spacing:1.5px;color:#0c0c16;text-indent:1.5px">信息描述</div>
<div style="position:absolute;left:1462px;top:71px;width:88px;height:24px;background:linear-gradient(#b8b8cc,#8a8aa0 45%,#4a4a5a)"></div>
<div class="t" style="left:1462px;width:88px;text-align:center;top:75.0px;line-height:16px;font-size:14.5px;letter-spacing:1.5px;color:#0c0c16;text-indent:1.5px">电源信息</div>
<div style="position:absolute;left:1551px;top:71px;width:100px;height:24px;background:linear-gradient(#b8b8cc,#8a8aa0 45%,#4a4a5a)"></div>
<div class="t" style="left:1551px;width:100px;text-align:center;top:75.0px;line-height:16px;font-size:14.5px;letter-spacing:1.5px;color:#0c0c16;text-indent:1.5px">时间戳</div>
<div style="position:absolute;left:1652px;top:71px;width:47px;height:24px;background:linear-gradient(#b8b8cc,#8a8aa0 45%,#4a4a5a)"></div>
<div class="t" style="left:1652px;top:75px;font-family:'Liberation Mono',monospace;font-size:13px;letter-spacing:0;color:#10101a">Msg ID</div>
<div style="position:absolute;left:957px;top:71px;width:1px;height:24px;background:#f4f4f8"></div>
<div style="position:absolute;left:1091px;top:71px;width:1px;height:24px;background:#f4f4f8"></div>
<div style="position:absolute;left:1192px;top:71px;width:1px;height:24px;background:#f4f4f8"></div>
<div style="position:absolute;left:1461px;top:71px;width:1px;height:24px;background:#f4f4f8"></div>
<div style="position:absolute;left:1550px;top:71px;width:1px;height:24px;background:#f4f4f8"></div>
<div style="position:absolute;left:1651px;top:71px;width:1px;height:24px;background:#f4f4f8"></div>
<div style="position:absolute;left:906px;top:95px;width:794px;height:327px;background:#f6f6f6"></div>
<div class="cell" style="left:908px;top:95px;width:49px;height:25px;background:#e8e8e8;"><span id="f9" style="display:inline-block;transform-origin:center;transform:scaleX(0.9446)">465</span></div>
<div class="cell" style="left:958px;top:95px;width:133px;height:25px;background:#b596c9;"><span id="f10" style="display:inline-block;transform-origin:center;transform:scaleX(0.9250)">SRC|SNK<svg class="arr" width="12" height="9" style="margin:0 0 0 -1px"><path d="M0 4.5H11.5M8.5 2L11.5 4.5L8.5 7" stroke="#111" stroke-width="1" fill="none"/></svg>Plug</span></div>
<div class="cell" style="left:1092px;top:95px;width:100px;height:25px;background:#4ea22a;padding-right:3px;"><span id="f11" style="display:inline-block;transform-origin:center;transform:scaleX(1.0153)">Vendor Defined</span></div>
<div class="cell" style="left:1193px;top:95px;width:268px;height:25px;background:#4ea22a;"><span id="f12" style="display:inline-block;transform-origin:center;transform:scaleX(0.9912)">请求 Discover Identity</span></div>
<div class="cell" style="left:1462px;top:95px;width:88px;height:25px;background:#e8e8e8;"><span id="f13" style="display:inline-block;transform-origin:center;transform:scaleX(0.9685)">4.98V/-0.00A</span></div>
<div class="cell" style="left:1551px;top:95px;width:100px;height:25px;background:#e8e8e8;"><span id="f14" style="display:inline-block;transform-origin:center;transform:scaleX(0.9367)">59:21:16.026</span></div>
<div class="cell" style="left:1652px;top:95px;width:47px;height:25px;background:#e8e8e8;">0</div>
<div class="cell" style="left:908px;top:121px;width:49px;height:25px;background:#e8e8e8;"><span id="f15" style="display:inline-block;transform-origin:center;transform:scaleX(0.9446)">466</span></div>
<div class="cell" style="left:958px;top:121px;width:133px;height:25px;background:#b596c9;"><span id="f16" style="display:inline-block;transform-origin:center;transform:scaleX(0.9250)">SRC|SNK<svg class="arr" width="12" height="9" style="margin:0 0 0 -1px"><path d="M0 4.5H11.5M8.5 2L11.5 4.5L8.5 7" stroke="#111" stroke-width="1" fill="none"/></svg>Plug</span></div>
<div class="cell" style="left:1092px;top:121px;width:100px;height:25px;background:#4ea22a;padding-right:3px;"><span id="f17" style="display:inline-block;transform-origin:center;transform:scaleX(1.0153)">Vendor Defined</span></div>
<div class="cell" style="left:1193px;top:121px;width:268px;height:25px;background:#4ea22a;"><span id="f18" style="display:inline-block;transform-origin:center;transform:scaleX(0.9912)">请求 Discover Identity</span></div>
<div class="cell" style="left:1462px;top:121px;width:88px;height:25px;background:#e8e8e8;"><span id="f19" style="display:inline-block;transform-origin:center;transform:scaleX(0.9614)">4.99V/0.00A</span></div>
<div class="cell" style="left:1551px;top:121px;width:100px;height:25px;background:#e8e8e8;"><span id="f20" style="display:inline-block;transform-origin:center;transform:scaleX(0.9367)">59:21:16.037</span></div>
<div class="cell" style="left:1652px;top:121px;width:47px;height:25px;background:#e8e8e8;">0</div>
<div class="cell" style="left:908px;top:147px;width:49px;height:25px;background:#e8e8e8;"><span id="f21" style="display:inline-block;transform-origin:center;transform:scaleX(0.9446)">467</span></div>
<div class="cell" style="left:958px;top:147px;width:133px;height:25px;background:#b596c9;"><span id="f22" style="display:inline-block;transform-origin:center;transform:scaleX(0.9250)">SRC|SNK<svg class="arr" width="12" height="9" style="margin:0 0 0 -1px"><path d="M0 4.5H11.5M8.5 2L11.5 4.5L8.5 7" stroke="#111" stroke-width="1" fill="none"/></svg>Plug</span></div>
<div class="cell" style="left:1092px;top:147px;width:100px;height:25px;background:#4ea22a;padding-right:3px;"><span id="f23" style="display:inline-block;transform-origin:center;transform:scaleX(1.0153)">Vendor Defined</span></div>
<div class="cell" style="left:1193px;top:147px;width:268px;height:25px;background:#4ea22a;"><span id="f24" style="display:inline-block;transform-origin:center;transform:scaleX(0.9912)">请求 Discover Identity</span></div>
<div class="cell" style="left:1462px;top:147px;width:88px;height:25px;background:#e8e8e8;"><span id="f25" style="display:inline-block;transform-origin:center;transform:scaleX(0.9614)">4.98V/0.00A</span></div>
<div class="cell" style="left:1551px;top:147px;width:100px;height:25px;background:#e8e8e8;"><span id="f26" style="display:inline-block;transform-origin:center;transform:scaleX(0.9367)">59:21:16.040</span></div>
<div class="cell" style="left:1652px;top:147px;width:47px;height:25px;background:#e8e8e8;">0</div>
<div class="cell" style="left:908px;top:173px;width:49px;height:25px;background:#e8e8e8;"><span id="f27" style="display:inline-block;transform-origin:center;transform:scaleX(0.9446)">468</span></div>
<div class="cell" style="left:958px;top:173px;width:133px;height:25px;background:#b596c9;"><span id="f28" style="display:inline-block;transform-origin:center;transform:scaleX(0.9250)">SRC|SNK<svg class="arr" width="12" height="9" style="margin:0 0 0 -1px"><path d="M0 4.5H11.5M8.5 2L11.5 4.5L8.5 7" stroke="#111" stroke-width="1" fill="none"/></svg>Plug</span></div>
<div class="cell" style="left:1092px;top:173px;width:100px;height:25px;background:#4ea22a;padding-right:3px;"><span id="f29" style="display:inline-block;transform-origin:center;transform:scaleX(1.0153)">Vendor Defined</span></div>
<div class="cell" style="left:1193px;top:173px;width:268px;height:25px;background:#4ea22a;"><span id="f30" style="display:inline-block;transform-origin:center;transform:scaleX(0.9912)">请求 Discover Identity</span></div>
<div class="cell" style="left:1462px;top:173px;width:88px;height:25px;background:#e8e8e8;"><span id="f31" style="display:inline-block;transform-origin:center;transform:scaleX(0.9614)">4.98V/0.01A</span></div>
<div class="cell" style="left:1551px;top:173px;width:100px;height:25px;background:#e8e8e8;"><span id="f32" style="display:inline-block;transform-origin:center;transform:scaleX(0.9367)">59:21:16.324</span></div>
<div class="cell" style="left:1652px;top:173px;width:47px;height:25px;background:#e8e8e8;">0</div>
<div class="cell" style="left:908px;top:199px;width:49px;height:25px;background:#e8e8e8;"><span id="f33" style="display:inline-block;transform-origin:center;transform:scaleX(0.9446)">469</span></div>
<div class="cell" style="left:958px;top:199px;width:133px;height:25px;background:#b596c9;"><span id="f34" style="display:inline-block;transform-origin:center;transform:scaleX(0.9250)">SRC|SNK<svg class="arr" width="12" height="9" style="margin:0 0 0 -1px"><path d="M0 4.5H11.5M8.5 2L11.5 4.5L8.5 7" stroke="#111" stroke-width="1" fill="none"/></svg>Plug</span></div>
<div class="cell" style="left:1092px;top:199px;width:100px;height:25px;background:#4ea22a;padding-right:3px;"><span id="f35" style="display:inline-block;transform-origin:center;transform:scaleX(1.0153)">Vendor Defined</span></div>
<div class="cell" style="left:1193px;top:199px;width:268px;height:25px;background:#4ea22a;"><span id="f36" style="display:inline-block;transform-origin:center;transform:scaleX(0.9912)">请求 Discover Identity</span></div>
<div class="cell" style="left:1462px;top:199px;width:88px;height:25px;background:#e8e8e8;"><span id="f37" style="display:inline-block;transform-origin:center;transform:scaleX(0.9614)">4.98V/0.01A</span></div>
<div class="cell" style="left:1551px;top:199px;width:100px;height:25px;background:#e8e8e8;"><span id="f38" style="display:inline-block;transform-origin:center;transform:scaleX(0.9367)">59:21:16.337</span></div>
<div class="cell" style="left:1652px;top:199px;width:47px;height:25px;background:#e8e8e8;">0</div>
<div class="cell" style="left:908px;top:225px;width:49px;height:25px;background:#e8e8e8;"><span id="f39" style="display:inline-block;transform-origin:center;transform:scaleX(0.9446)">470</span></div>
<div class="cell" style="left:958px;top:225px;width:133px;height:25px;background:#b596c9;"><span id="f40" style="display:inline-block;transform-origin:center;transform:scaleX(0.9250)">SRC|SNK<svg class="arr" width="12" height="9" style="margin:0 0 0 -1px"><path d="M0 4.5H11.5M8.5 2L11.5 4.5L8.5 7" stroke="#111" stroke-width="1" fill="none"/></svg>Plug</span></div>
<div class="cell" style="left:1092px;top:225px;width:100px;height:25px;background:#4ea22a;padding-right:3px;"><span id="f41" style="display:inline-block;transform-origin:center;transform:scaleX(1.0153)">Vendor Defined</span></div>
<div class="cell" style="left:1193px;top:225px;width:268px;height:25px;background:#4ea22a;"><span id="f42" style="display:inline-block;transform-origin:center;transform:scaleX(0.9912)">请求 Discover Identity</span></div>
<div class="cell" style="left:1462px;top:225px;width:88px;height:25px;background:#e8e8e8;"><span id="f43" style="display:inline-block;transform-origin:center;transform:scaleX(0.9614)">4.98V/0.01A</span></div>
<div class="cell" style="left:1551px;top:225px;width:100px;height:25px;background:#e8e8e8;"><span id="f44" style="display:inline-block;transform-origin:center;transform:scaleX(0.9367)">59:21:16.338</span></div>
<div class="cell" style="left:1652px;top:225px;width:47px;height:25px;background:#e8e8e8;">0</div>
<div class="cell" style="left:908px;top:251px;width:49px;height:25px;background:#e8e8e8;"><span id="f45" style="display:inline-block;transform-origin:center;transform:scaleX(0.9446)">471</span></div>
<div class="cell" style="left:958px;top:251px;width:133px;height:25px;background:#b596c9;"><span id="f46" style="display:inline-block;transform-origin:center;transform:scaleX(0.9250)">SRC|SNK<svg class="arr" width="12" height="9" style="margin:0 0 0 -1px"><path d="M0 4.5H11.5M8.5 2L11.5 4.5L8.5 7" stroke="#111" stroke-width="1" fill="none"/></svg>Plug</span></div>
<div class="cell" style="left:1092px;top:251px;width:100px;height:25px;background:#4ea22a"><div style="position:absolute;left:-40px;right:1px;top:3px;text-align:right"><span id="f47" style="display:inline-block;transform-origin:right;transform:scaleX(1.0361)">Vendor Defined √</span></div></div>
<div class="cell" style="left:1193px;top:251px;width:268px;height:25px;background:#4ea22a;"><span id="f48" style="display:inline-block;transform-origin:center;transform:scaleX(0.9912)">请求 Discover Identity</span></div>
<div class="cell" style="left:1462px;top:251px;width:88px;height:25px;background:#e8e8e8;"><span id="f49" style="display:inline-block;transform-origin:center;transform:scaleX(0.9614)">4.98V/0.00A</span></div>
<div class="cell" style="left:1551px;top:251px;width:100px;height:25px;background:#e8e8e8;"><span id="f50" style="display:inline-block;transform-origin:center;transform:scaleX(0.9367)">59:21:16.384</span></div>
<div class="cell" style="left:1652px;top:251px;width:47px;height:25px;background:#e8e8e8;">0</div>
<div class="cell" style="left:908px;top:277px;width:49px;height:25px;background:#e8e8e8;"><span id="f51" style="display:inline-block;transform-origin:center;transform:scaleX(0.9446)">472</span></div>
<div class="cell" style="left:958px;top:277px;width:133px;height:25px;background:#96c6e6;"><span id="f52" style="display:inline-block;transform-origin:center;transform:scaleX(0.9250)">SRC|SNK<svg class="arr" width="12" height="9" style="margin:0 0 0 -1px"><path d="M12 4.5H0.5M3.5 2L0.5 4.5L3.5 7" stroke="#111" stroke-width="1" fill="none"/></svg>Plug</span></div>
<div class="cell" style="left:1092px;top:277px;width:100px;height:25px;background:#1c9a46"><div style="position:absolute;left:-40px;right:1px;top:3px;text-align:right"><span id="f53" style="display:inline-block;transform-origin:right;transform:scaleX(1.0361)">Vendor Defined √</span></div></div>
<div class="cell" style="left:1193px;top:277px;width:268px;height:25px;background:#1c9a46;"><span id="f54" style="display:inline-block;transform-origin:center;transform:scaleX(0.9912)">回复 Discover Identity</span></div>
<div class="cell" style="left:1462px;top:277px;width:88px;height:25px;background:#e8e8e8;"><span id="f55" style="display:inline-block;transform-origin:center;transform:scaleX(0.9614)">4.98V/0.00A</span></div>
<div class="cell" style="left:1551px;top:277px;width:100px;height:25px;background:#e8e8e8;"><span id="f56" style="display:inline-block;transform-origin:center;transform:scaleX(0.9367)">59:21:16.397</span></div>
<div class="cell" style="left:1652px;top:277px;width:47px;height:25px;background:#e8e8e8;">0</div>
<div class="cell" style="left:908px;top:303px;width:49px;height:25px;background:#e8e8e8;"><span id="f57" style="display:inline-block;transform-origin:center;transform:scaleX(0.9446)">473</span></div>
<div class="cell" style="left:958px;top:303px;width:133px;height:25px;background:#c9c6e6;"><span id="f58" style="display:inline-block;transform-origin:center;transform:scaleX(0.9729)">Source<svg class="arr" width="12" height="9" style="margin:0 0 0 -1px"><path d="M0 4.5H11.5M8.5 2L11.5 4.5L8.5 7" stroke="#111" stroke-width="1" fill="none"/></svg>Sink</span></div>
<div class="cell" style="left:1092px;top:303px;width:100px;height:25px;background:#8ef23e;"><span id="f59" style="display:inline-block;transform-origin:center;transform:scaleX(0.9657)">Source Cap</span></div>
<div class="cell" style="left:1193px;top:303px;width:268px;height:25px;background:#8ef23e;"><span id="f60" style="display:inline-block;transform-origin:center;transform:scaleX(0.8950)">收到5个SOURCE_CAP供电能力数据包</span></div>
<div class="cell" style="left:1462px;top:303px;width:88px;height:25px;background:#e8e8e8;"><span id="f61" style="display:inline-block;transform-origin:center;transform:scaleX(0.9614)">4.98V/0.00A</span></div>
<div class="cell" style="left:1551px;top:303px;width:100px;height:25px;background:#e8e8e8;"><span id="f62" style="display:inline-block;transform-origin:center;transform:scaleX(0.9367)">59:21:16.477</span></div>
<div class="cell" style="left:1652px;top:303px;width:47px;height:25px;background:#e8e8e8;">0</div>
<div class="cell" style="left:908px;top:329px;width:49px;height:25px;background:#e8e8e8;"><span id="f63" style="display:inline-block;transform-origin:center;transform:scaleX(0.9446)">474</span></div>
<div class="cell" style="left:958px;top:329px;width:133px;height:25px;background:#46b0c8;"><span id="f64" style="display:inline-block;transform-origin:center;transform:scaleX(0.9729)">Source<svg class="arr" width="12" height="9" style="margin:0 0 0 -1px"><path d="M12 4.5H0.5M3.5 2L0.5 4.5L3.5 7" stroke="#111" stroke-width="1" fill="none"/></svg>Sink</span></div>
<div class="cell" style="left:1092px;top:329px;width:100px;height:25px;background:#ffc6ca;"><span id="f65" style="display:inline-block;transform-origin:center;transform:scaleX(0.9582)">Request √</span></div>
<div class="cell" style="left:1193px;top:329px;width:268px;height:25px;background:#ffc6ca;"><span id="f66" style="display:inline-block;transform-origin:center;transform:scaleX(0.9580)">请求 20.000V/3.250A</span></div>
<div class="cell" style="left:1462px;top:329px;width:88px;height:25px;background:#e8e8e8;"><span id="f67" style="display:inline-block;transform-origin:center;transform:scaleX(0.9685)">4.98V/-0.00A</span></div>
<div class="cell" style="left:1551px;top:329px;width:100px;height:25px;background:#e8e8e8;"><span id="f68" style="display:inline-block;transform-origin:center;transform:scaleX(0.9367)">59:21:16.490</span></div>
<div class="cell" style="left:1652px;top:329px;width:47px;height:25px;background:#e8e8e8;">0</div>
<div class="cell" style="left:908px;top:355px;width:49px;height:25px;background:#e8e8e8;"><span id="f69" style="display:inline-block;transform-origin:center;transform:scaleX(0.9446)">475</span></div>
<div class="cell" style="left:958px;top:355px;width:133px;height:25px;background:#c9c6e6;"><span id="f70" style="display:inline-block;transform-origin:center;transform:scaleX(0.9729)">Source<svg class="arr" width="12" height="9" style="margin:0 0 0 -1px"><path d="M0 4.5H11.5M8.5 2L11.5 4.5L8.5 7" stroke="#111" stroke-width="1" fill="none"/></svg>Sink</span></div>
<div class="cell" style="left:1092px;top:355px;width:100px;height:25px;background:#ffc79c;"><span id="f71" style="display:inline-block;transform-origin:center;transform:scaleX(0.9743)">Accept √</span></div>
<div class="cell" style="left:1193px;top:355px;width:268px;height:25px;background:#ffc79c;"><span id="f72" style="display:inline-block;transform-origin:center;transform:scaleX(0.9088)">供电端接受请求</span></div>
<div class="cell" style="left:1462px;top:355px;width:88px;height:25px;background:#e8e8e8;"><span id="f73" style="display:inline-block;transform-origin:center;transform:scaleX(0.9614)">4.99V/0.00A</span></div>
<div class="cell" style="left:1551px;top:355px;width:100px;height:25px;background:#e8e8e8;"><span id="f74" style="display:inline-block;transform-origin:center;transform:scaleX(0.9367)">59:21:16.493</span></div>
<div class="cell" style="left:1652px;top:355px;width:47px;height:25px;background:#e8e8e8;">1</div>
<div class="cell" style="left:908px;top:381px;width:49px;height:25px;background:#e8e8e8;"><span id="f75" style="display:inline-block;transform-origin:center;transform:scaleX(0.9446)">476</span></div>
<div class="cell" style="left:958px;top:381px;width:133px;height:25px;background:#c9c6e6;"><span id="f76" style="display:inline-block;transform-origin:center;transform:scaleX(0.9729)">Source<svg class="arr" width="12" height="9" style="margin:0 0 0 -1px"><path d="M0 4.5H11.5M8.5 2L11.5 4.5L8.5 7" stroke="#111" stroke-width="1" fill="none"/></svg>Sink</span></div>
<div class="cell" style="left:1092px;top:381px;width:100px;height:25px;background:#ffc46a;"><span id="f77" style="display:inline-block;transform-origin:center;transform:scaleX(0.9063)">PS RDY √</span></div>
<div class="cell" style="left:1193px;top:381px;width:268px;height:25px;background:#ffc46a;"><span id="f78" style="display:inline-block;transform-origin:center;transform:scaleX(0.9186)">供电端已调整到请求的供电能力规格上</span></div>
<div class="cell" style="left:1462px;top:381px;width:88px;height:25px;background:#e8e8e8;"><span id="f79" style="display:inline-block;transform-origin:center;transform:scaleX(0.9684)">19.98V/-0.00A</span></div>
<div class="cell" style="left:1551px;top:381px;width:100px;height:25px;background:#e8e8e8;"><span id="f80" style="display:inline-block;transform-origin:center;transform:scaleX(0.9367)">59:21:16.614</span></div>
<div class="cell" style="left:1652px;top:381px;width:47px;height:25px;background:#e8e8e8;">2</div>
<div style="position:absolute;left:908px;top:407px;width:49px;height:14px;background:#e8e8e8"></div>
<div style="position:absolute;left:958px;top:407px;width:133px;height:14px;background:#e8e8e8"></div>
<div style="position:absolute;left:1092px;top:407px;width:100px;height:14px;background:#e8e8e8"></div>
<div style="position:absolute;left:1193px;top:407px;width:268px;height:14px;background:#e8e8e8"></div>
<div style="position:absolute;left:1462px;top:407px;width:88px;height:14px;background:#e8e8e8"></div>
<div style="position:absolute;left:1551px;top:407px;width:100px;height:14px;background:#e8e8e8"></div>
<div style="position:absolute;left:1652px;top:407px;width:47px;height:14px;background:#e8e8e8"></div>
<div style="position:absolute;left:1700px;top:70px;width:17px;height:352px;background:#f0f0f0"></div>
<svg style="position:absolute;left:1703px;top:76px" width="10" height="8"><path d="M1 6L5 2L9 6" stroke="#555" stroke-width="1.4" fill="none"/></svg>
<svg style="position:absolute;left:1703px;top:411px" width="10" height="8"><path d="M1 2L5 6L9 2" stroke="#555" stroke-width="1.4" fill="none"/></svg>
<div style="position:absolute;left:1701px;top:388px;width:15px;height:18px;background:#cdcdcd"></div>
<div style="position:absolute;left:906px;top:422px;width:811px;height:18px;background:#f0f0f0"></div>
<svg style="position:absolute;left:912px;top:426px" width="8" height="10"><path d="M6 1L2 5L6 9" stroke="#555" stroke-width="1.4" fill="none"/></svg>
<div style="position:absolute;left:924px;top:423px;width:757px;height:15px;background:#cdcdcd"></div>
<svg style="position:absolute;left:1686px;top:426px" width="8" height="10"><path d="M2 1L6 5L2 9" stroke="#555" stroke-width="1.4" fill="none"/></svg>
<div style="position:absolute;left:905px;top:449px;width:359px;height:260px;border:1px solid #a0a0a0;background:#fff"><div style="position:absolute;left:1px;top:1px;right:1px;bottom:1px;border:1px solid #6a6a6a"></div></div>
<div style="position:absolute;left:1269px;top:449px;width:344px;height:34px;border:1px solid #dcdcdc"></div>
<div class="t " style="left:1276px;top:443px;font-size:12px;background:#f0f0f0;padding:0 1px"><span id="f81" style="display:inline-block;transform-origin:left;transform:scaleX(0.9117)">USB-C CC线工作状态</span></div>
<div style="position:absolute;left:1280px;top:462.5px;width:13px;height:13px;border:1px solid #333;border-radius:50%;background:#fff"></div>
<div class="t " style="left:1295px;top:461px;font-size:12px"><span id="f82" style="display:inline-block;transform-origin:left;transform:scaleX(0.9767)">闲置 Idle</span></div>
<div style="position:absolute;left:1352px;top:462.5px;width:13px;height:13px;border:1px solid #333;border-radius:50%;background:#fff"></div>
<div class="t " style="left:1367px;top:461px;font-size:12px"><span id="f83" style="display:inline-block;transform-origin:left;transform:scaleX(0.9432)">触发 Sniffer</span></div>
<div style="position:absolute;left:1437px;top:462.5px;width:13px;height:13px;border:1px solid #333;border-radius:50%;background:#fff"></div><div style="position:absolute;left:1440.5px;top:466px;width:6px;height:6px;border-radius:50%;background:#222"></div>
<div class="t " style="left:1452px;top:461px;font-size:12px"><span id="f84" style="display:inline-block;transform-origin:left;transform:scaleX(0.9264)">监听 Monitor</span></div>
<div style="position:absolute;left:1526px;top:462.5px;width:13px;height:13px;border:1px solid #333;border-radius:50%;background:#fff"></div>
<div class="t " style="left:1541px;top:461px;font-size:12px"><span id="f85" style="display:inline-block;transform-origin:left;transform:scaleX(0.9156)">测线 E-Marker</span></div>
<div class="btn" style="left:1639px;top:454px;width:71px;height:19px;"><div style="position:absolute;left:0;right:0;top:calc(50% + 0px);transform:translateY(-50%);text-align:center;line-height:16px;font-size:12px"><span id="f86" style="display:inline-block;transform-origin:center;transform:scaleX(0.9462)">清空 Clear</span></div></div>
<div class="t " style="left:1276px;top:487px;font-size:12px"><span id="f87" style="display:inline-block;transform-origin:left;transform:scaleX(0.9375)">PDO 列表 (请点击列表中的Source Cap)</span></div>
<div style="position:absolute;left:1272px;top:506px;width:158px;height:104px;border:1px solid #828282;background:#fff"></div>
<div class="btn" style="left:1434px;top:504px;width:89px;height:22px;background:#cccccc;border-color:#bfbfbf"><div style="position:absolute;left:0;right:0;top:calc(50% + 0px);transform:translateY(-50%);text-align:center;line-height:16px;font-size:12px;color:#8d8d8d"><span id="f88" style="display:inline-block;transform-origin:center;transform:scaleX(0.8693)">Get Source Cap</span></div></div>
<div class="btn" style="left:1530px;top:504px;width:89px;height:22px;"><div style="position:absolute;left:0;right:0;top:calc(50% + 0px);transform:translateY(-50%);text-align:center;line-height:16px;font-size:12px;"><span id="f89" style="display:inline-block;transform-origin:center;transform:scaleX(0.8432)">FUSB302 Regs</span></div></div>
<div class="btn" style="left:1434px;top:532px;width:89px;height:22px;background:#cccccc;border-color:#bfbfbf"><div style="position:absolute;left:0;right:0;top:calc(50% + 0px);transform:translateY(-50%);text-align:center;line-height:16px;font-size:12px;color:#8d8d8d"><span id="f90" style="display:inline-block;transform-origin:center;transform:scaleX(0.8546)">Get Sink Cap</span></div></div>
<div class="btn" style="left:1530px;top:532px;width:89px;height:22px;background:#cccccc;border-color:#bfbfbf"><div style="position:absolute;left:0;right:0;top:calc(50% + 0px);transform:translateY(-50%);text-align:center;line-height:16px;font-size:12px;color:#8d8d8d"><span id="f91" style="display:inline-block;transform-origin:center;transform:scaleX(0.9138)">Soft Reset</span></div></div>
<div class="btn" style="left:1434px;top:560px;width:89px;height:22px;background:#cccccc;border-color:#bfbfbf"><div style="position:absolute;left:0;right:0;top:calc(50% + 0px);transform:translateY(-50%);text-align:center;line-height:16px;font-size:12px;color:#8d8d8d"><span id="f92" style="display:inline-block;transform-origin:center;transform:scaleX(0.8714)">E-Marker</span></div></div>
<div class="btn" style="left:1530px;top:560px;width:89px;height:22px;background:#cccccc;border-color:#bfbfbf"><div style="position:absolute;left:0;right:0;top:calc(50% + 0px);transform:translateY(-50%);text-align:center;line-height:16px;font-size:12px;color:#8d8d8d"><span id="f93" style="display:inline-block;transform-origin:center;transform:scaleX(0.9060)">Hard Reset</span></div></div>
<div class="btn" style="left:1434px;top:587px;width:89px;height:22px;background:#cccccc;border-color:#bfbfbf"><div style="position:absolute;left:0;right:0;top:calc(50% + 0px);transform:translateY(-50%);text-align:center;line-height:16px;font-size:12px;color:#8d8d8d"><span id="f94" style="display:inline-block;transform-origin:center;transform:scaleX(0.8364)">VDM_Req</span></div></div>
<div class="btn" style="left:1530px;top:587px;width:89px;height:22px;background:#cccccc;border-color:#bfbfbf"><div style="position:absolute;left:0;right:0;top:calc(50% + 0px);transform:translateY(-50%);text-align:center;line-height:16px;font-size:12px;color:#8d8d8d"><span id="f95" style="display:inline-block;transform-origin:center;transform:scaleX(0.8237)">Apple VDM</span></div></div>
<div class="btn" style="left:1434px;top:614px;width:89px;height:22px;"><div style="position:absolute;left:0;right:0;top:calc(50% + 0px);transform:translateY(-50%);text-align:center;line-height:16px;font-size:12px"><span id="f96" style="display:inline-block;transform-origin:center;transform:scaleX(0.9120)">Get src cap ext</span></div></div>
<div style="position:absolute;left:1625px;top:505px;width:90px;height:106px;border:1px solid #dcdcdc"></div>
<div class="t " style="left:1632px;top:497px;font-size:12px;background:#f0f0f0;padding:0 1px"><span id="f97" style="display:inline-block;transform-origin:left;transform:scaleX(0.8247)">Edit VDM</span></div>
<div style="position:absolute;left:1634px;top:532px;width:59px;height:20px;border:1px solid #7a7a7a;background:#fff"></div>
<div class="btn" style="left:1635px;top:558px;width:56px;height:17px;"><div style="position:absolute;left:0;right:0;top:calc(50% + 0px);transform:translateY(-50%);text-align:center;line-height:16px;font-size:12px"><span id="f98" style="display:inline-block;transform-origin:center;transform:scaleX(0.8375)">Send VDM</span></div></div>
<div class="t " style="left:1276px;top:651px;font-size:12px"><span id="f99" style="display:inline-block;transform-origin:left;transform:scaleX(0.8948)">PPS QC4+触发</span></div>
<div style="position:absolute;left:1359px;top:653px;width:13px;height:13px;border:1px solid #c4c4c4;background:#fff"></div>
<div class="t " style="left:1375px;top:651px;font-size:12px;color:#7a7a7a"><span id="f100" style="display:inline-block;transform-origin:left;transform:scaleX(0.9958)">自动测试</span></div>
<div style="position:absolute;left:1436px;top:653px;width:13px;height:13px;border:1px solid #c4c4c4;background:#fff"></div>
<div class="t " style="left:1452px;top:651px;font-size:12px;color:#7a7a7a"><span id="f101" style="display:inline-block;transform-origin:left;transform:scaleX(0.9438)">开启小米或黑鲨 65W 充电器PPS</span></div>
<div style="position:absolute;left:1278px;top:672px;width:1px;height:3px;background:#b0b0b0"></div>
<div style="position:absolute;left:1304px;top:672px;width:1px;height:3px;background:#b0b0b0"></div>
<div style="position:absolute;left:1329px;top:672px;width:1px;height:3px;background:#b0b0b0"></div>
<div style="position:absolute;left:1355px;top:672px;width:1px;height:3px;background:#b0b0b0"></div>
<div style="position:absolute;left:1381px;top:672px;width:1px;height:3px;background:#b0b0b0"></div>
<div style="position:absolute;left:1406px;top:672px;width:1px;height:3px;background:#b0b0b0"></div>
<div style="position:absolute;left:1432px;top:672px;width:1px;height:3px;background:#b0b0b0"></div>
<div style="position:absolute;left:1458px;top:672px;width:1px;height:3px;background:#b0b0b0"></div>
<div style="position:absolute;left:1484px;top:672px;width:1px;height:3px;background:#b0b0b0"></div>
<div style="position:absolute;left:1509px;top:672px;width:1px;height:3px;background:#b0b0b0"></div>
<div style="position:absolute;left:1535px;top:672px;width:1px;height:3px;background:#b0b0b0"></div>
<div style="position:absolute;left:1273px;top:680px;width:268px;height:16px;background:#e6e6e6;border-top:1px solid #d8d8d8"></div>
<div style="position:absolute;left:1273px;top:677px;width:10px;height:19px;background:#c8c8c8"></div>
<div style="position:absolute;left:1549px;top:676px;width:60px;height:1px;background:#ffffff"></div>
<svg style="position:absolute;left:1556px;top:684px" width="8" height="10"><path d="M6 1L2 5L6 9" stroke="#aaa" stroke-width="1.4" fill="none"/></svg>
<svg style="position:absolute;left:1586px;top:684px" width="8" height="10"><path d="M2 1L6 5L2 9" stroke="#aaa" stroke-width="1.4" fill="none"/></svg>
</body></html>
